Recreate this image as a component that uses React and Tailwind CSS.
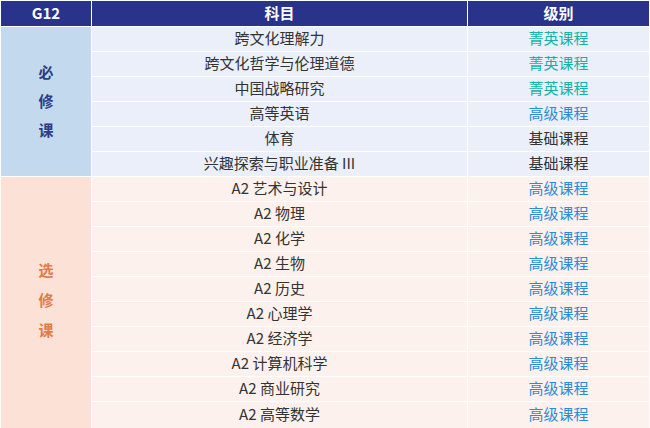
import React from "react";

const req = [
  ["跨文化理解力", "菁英课程", "t"],
  ["跨文化哲学与伦理道德", "菁英课程", "t"],
  ["中国战略研究", "菁英课程", "t"],
  ["高等英语", "高级课程", "b"],
  ["体育", "基础课程", "d"],
  ["兴趣探索与职业准备 III", "基础课程", "d"],
];
const ele = [
  "A2 艺术与设计",
  "A2 物理",
  "A2 化学",
  "A2 生物",
  "A2 历史",
  "A2 心理学",
  "A2 经济学",
  "A2 计算机科学",
  "A2 商业研究",
  "A2 高等数学",
];

const color = {
  t: "text-[#14b3a6]",
  b: "text-[#2b8bd8]",
  d: "text-[#333333]",
};

export default function App() {
  return (
    <div
      className="w-[650px] h-[428px] bg-white pt-[1px] px-[1px] grid grid-cols-[90px_375px_1fr] grid-rows-[25px_repeat(15,24px)_1fr] gap-[1px] text-[15px] text-[#333333]"
      style={{ fontFamily: '"Noto Sans CJK SC", "Noto Sans", sans-serif' }}
    >
      <div className="bg-[#283389] text-white font-bold flex items-center justify-center pb-[2px] leading-none">G12</div>
      <div className="bg-[#283389] text-white font-bold flex items-center justify-center pb-[2px] leading-none">科目</div>
      <div className="bg-[#283389] text-white font-bold flex items-center justify-center pb-[2px] leading-none">级别</div>

      <div className="row-span-6 bg-[#c3d9ee] flex flex-col items-center justify-center gap-[8px] pb-[3px] text-[#2d3c85] font-bold leading-[21px]">
        <span>必</span>
        <span>修</span>
        <span>课</span>
      </div>
      {req.map(([s, l, c]) => (
        <React.Fragment key={s}>
          <div className="col-start-2 bg-[#ebeff9] flex items-center justify-center leading-none pb-[4px]">{s}</div>
          <div className={`bg-[#ebeff9] flex items-center justify-center leading-none pb-[4px] ${color[c]}`}>{l}</div>
        </React.Fragment>
      ))}

      <div className="row-span-10 bg-[#fce2d6] flex flex-col items-center justify-center gap-[9px] pb-[6px] text-[#e07b48] font-bold leading-[21px]">
        <span>选</span>
        <span>修</span>
        <span>课</span>
      </div>
      {ele.map((s) => (
        <React.Fragment key={s}>
          <div className="col-start-2 bg-[#fcf1ec] flex items-center justify-center leading-none pb-[4px] whitespace-pre">{s}</div>
          <div className="bg-[#fcf1ec] flex items-center justify-center leading-none pb-[4px] text-[#2b8bd8]">高级课程</div>
        </React.Fragment>
      ))}
    </div>
  );
}
